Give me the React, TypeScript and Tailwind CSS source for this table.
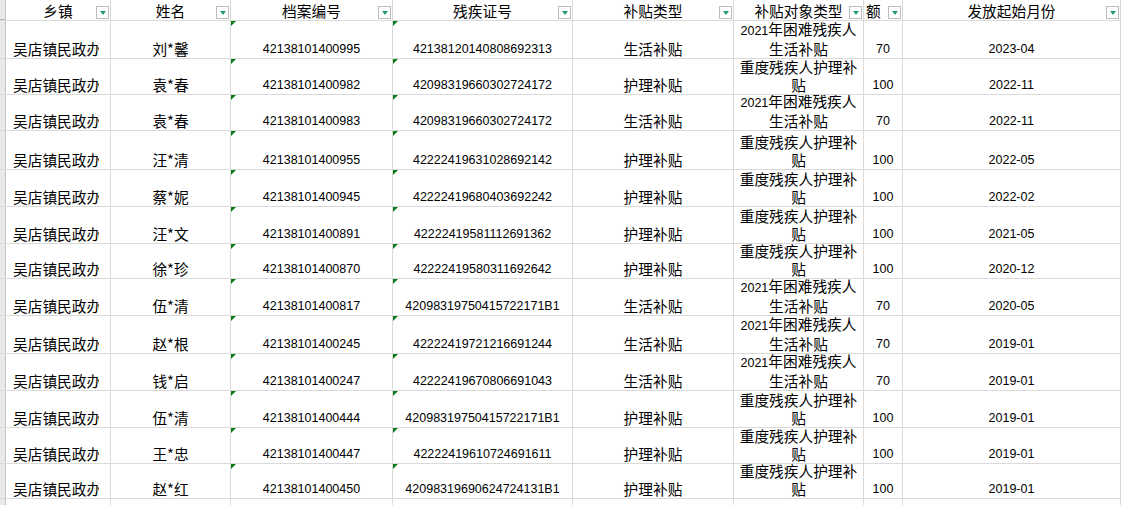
import React from "react";

const CJK = "font-['Noto_Sans_CJK_SC','Noto_Sans',sans-serif]";
const NUM = "font-['Liberation_Sans','Noto_Sans_CJK_SC',Arial,sans-serif]";

type Row = {
  h: string;
  name: string;
  file: string;
  card: string;
  type: string;
  target: "a" | "b";
  amount: string;
  date: string;
};

const rows: Row[] = [
  { h: "h-[38px]", name: "刘*馨", file: "42138101400995", card: "42138120140808692313", type: "生活补贴", target: "a", amount: "70", date: "2023-04" },
  { h: "h-[36px]", name: "袁*春", file: "42138101400982", card: "42098319660302724172", type: "护理补贴", target: "b", amount: "100", date: "2022-11" },
  { h: "h-[36px]", name: "袁*春", file: "42138101400983", card: "42098319660302724172", type: "生活补贴", target: "a", amount: "70", date: "2022-11" },
  { h: "h-[39px]", name: "汪*清", file: "42138101400955", card: "42222419631028692142", type: "护理补贴", target: "b", amount: "100", date: "2022-05" },
  { h: "h-[37px]", name: "蔡*妮", file: "42138101400945", card: "42222419680403692242", type: "护理补贴", target: "b", amount: "100", date: "2022-02" },
  { h: "h-[37px]", name: "汪*文", file: "42138101400891", card: "42222419581112691362", type: "护理补贴", target: "b", amount: "100", date: "2021-05" },
  { h: "h-[35px]", name: "徐*珍", file: "42138101400870", card: "42222419580311692642", type: "护理补贴", target: "b", amount: "100", date: "2020-12" },
  { h: "h-[37px]", name: "伍*清", file: "42138101400817", card: "42098319750415722171B1", type: "生活补贴", target: "a", amount: "70", date: "2020-05" },
  { h: "h-[38px]", name: "赵*根", file: "42138101400245", card: "42222419721216691244", type: "生活补贴", target: "a", amount: "70", date: "2019-01" },
  { h: "h-[37px]", name: "钱*启", file: "42138101400247", card: "42222419670806691043", type: "生活补贴", target: "a", amount: "70", date: "2019-01" },
  { h: "h-[37px]", name: "伍*清", file: "42138101400444", card: "42098319750415722171B1", type: "护理补贴", target: "b", amount: "100", date: "2019-01" },
  { h: "h-[36px]", name: "王*忠", file: "42138101400447", card: "42222419610724691611", type: "护理补贴", target: "b", amount: "100", date: "2019-01" },
  { h: "h-[35px]", name: "赵*红", file: "42138101400450", card: "42098319690624724131B1", type: "护理补贴", target: "b", amount: "100", date: "2019-01" },
];

const W = {
  strip: "w-[6px]",
  c1: "w-[105px]",
  c2: "w-[120px]",
  c3: "w-[162px]",
  c4: "w-[180px]",
  c5: "w-[161px]",
  c6: "w-[130px]",
  c7: "w-[39px]",
  c8: "w-[218px]",
};

const cellBase = "relative shrink-0 border-r border-[#dadada] overflow-hidden flex items-end justify-center leading-[18px] text-black";

function FilterBtn() {
  return (
    <div className="absolute right-[1px] bottom-[1px] w-[13px] h-[13px] border border-[#bdbdbd] bg-white flex items-center justify-center">
      <div className="w-0 h-0 border-l-[3.5px] border-r-[3.5px] border-t-[4px] border-l-transparent border-r-transparent border-t-[#22a06b]" />
    </div>
  );
}

function GreenMark() {
  return (
    <div className="absolute top-0 left-0 w-0 h-0 border-t-[5px] border-r-[5px] border-t-[#0b7a1c] border-r-transparent" />
  );
}

function Header({ w, label, className = "" }: { w: string; label: string; className?: string }) {
  return (
    <div className={`${cellBase} ${w} ${CJK} text-[14.7px] ${className}`}>
      <span className="pb-0">{label}</span>
      <FilterBtn />
    </div>
  );
}

function Strip({ h }: { h: string }) {
  return <div className={`${W.strip} ${h} shrink-0 bg-[#e8e8e8] border-r border-[#c4c4c4]`} />;
}

function TargetText({ t }: { t: "a" | "b" }) {
  if (t === "a") {
    return (
      <span className={`${CJK} text-[14.7px] text-center`}>
        <span className={`${NUM} text-[12.5px]`}>2021</span>年困难残疾人生活补贴
      </span>
    );
  }
  return <span className={`${CJK} text-[14.7px] text-center`}>重度残疾人护理补贴</span>;
}

export default function App() {
  return (
    <div className="w-[1121px] h-[505px] overflow-hidden bg-white">
      {/* header */}
      <div className="flex h-[21px] border-b border-[#dadada] border-t-0">
        <div className={`${W.strip} shrink-0 bg-[#e8e8e8] border-r border-[#c4c4c4] border-b border-b-[#b8b8b8]`} />
        <Header w={W.c1} label="乡镇" />
        <Header w={W.c2} label="姓名" />
        <Header w={W.c3} label="档案编号" />
        <Header w={W.c4} label="残疾证号" />
        <Header w={W.c5} label="补贴类型" />
        <Header w={W.c6} label="补贴对象类型" />
        <div className={`${cellBase} ${W.c7} ${CJK} text-[14.7px] !justify-start pl-[2px]`}>
          <span>额</span>
          <FilterBtn />
        </div>
        <Header w={W.c8} label="发放起始月份" />
      </div>
      {rows.map((r, i) => (
        <div key={i} className={`flex ${r.h} border-b border-[#dadada]`}>
          <Strip h="h-full" />
          <div className={`${cellBase} ${W.c1} !justify-start ${CJK} text-[14.7px]`}>
            <div className="ml-[7px] w-[86px] overflow-hidden whitespace-nowrap">吴店镇民政办</div>
          </div>
          <div className={`${cellBase} ${W.c2} ${CJK} text-[14.7px]`}>{r.name}</div>
          <div className={`${cellBase} ${W.c3} ${NUM} text-[12.5px]`}>
            <GreenMark />
            {r.file}
          </div>
          <div className={`${cellBase} ${W.c4} ${NUM} text-[12.5px]`}>
            <GreenMark />
            {r.card}
          </div>
          <div className={`${cellBase} ${W.c5} ${CJK} text-[14.7px]`}>{r.type}</div>
          <div className={`${cellBase} ${W.c6} px-[3px]`}>
            <TargetText t={r.target} />
          </div>
          <div className={`${cellBase} ${W.c7} ${NUM} text-[12.5px]`}>{r.amount}</div>
          <div className={`${cellBase} ${W.c8} ${NUM} text-[12.5px]`}>{r.date}</div>
        </div>
      ))}
      <div className="flex h-[20px]">
        <Strip h="h-full" />
        <div className={`${cellBase} ${W.c1}`} />
        <div className={`${cellBase} ${W.c2}`} />
        <div className={`${cellBase} ${W.c3}`} />
        <div className={`${cellBase} ${W.c4}`} />
        <div className={`${cellBase} ${W.c5}`} />
        <div className={`${cellBase} ${W.c6}`} />
        <div className={`${cellBase} ${W.c7}`} />
        <div className={`${cellBase} ${W.c8}`} />
      </div>
    </div>
  );
}
